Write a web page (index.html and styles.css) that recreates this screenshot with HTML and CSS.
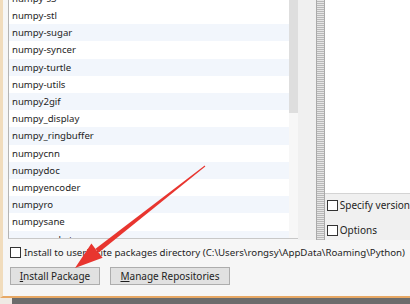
FILE: index.html
```html
<!DOCTYPE html>
<html>
<head>
<meta charset="utf-8">
<link rel="stylesheet" href="styles.css">
</head>
<body>
<div class="window">
  <div class="top">
    <div class="list">
      <div class="rows">
        <div class="row">numpy-s3</div>
        <div class="row">numpy-stl</div>
        <div class="row alt">numpy-sugar</div>
        <div class="row">numpy-syncer</div>
        <div class="row alt">numpy-turtle</div>
        <div class="row">numpy-utils</div>
        <div class="row alt">numpy2gif</div>
        <div class="row">numpy_display</div>
        <div class="row alt">numpy_ringbuffer</div>
        <div class="row">numpycnn</div>
        <div class="row alt">numpydoc</div>
        <div class="row">numpyencoder</div>
        <div class="row alt">numpyro</div>
        <div class="row">numpysane</div>
        <div class="row alt">numpysocket</div>
      </div>
      <div class="scrollbar"><div class="thumb"></div></div>
    </div>
    <div class="gap"></div>
    <div class="splitter"></div>
    <div class="right">
      <div class="desc"></div>
      <div class="opts">
        <label class="check"><span class="box"></span>Specify version</label>
        <label class="check"><span class="box"></span>Options</label>
      </div>
    </div>
  </div>
  <div class="bottom">
    <label class="check site"><span class="box"></span>Install to user's site packages directory (C:\Users\rongsy\AppData\Roaming\Python)</label>
    <div class="buttons">
      <button class="btn install"><u>I</u>nstall Package</button>
      <button class="btn manage"><u>M</u>anage Repositories</button>
    </div>
  </div>
</div>
<div class="desktop"><div class="shadow"></div><div class="taskbar"></div></div>
<svg class="arrow" width="410" height="304" viewBox="0 0 410 304">
  <polygon points="205.3,166.4 204.7,165.6 95.5,248.7 98.5,252.7" fill="#e8352f"/>
  <polygon points="75,268 91.4,243.6 97,251 102.6,257.8" fill="#e8352f"/>
</svg>
</body>
</html>
```
FILE: styles.css
```css
* { box-sizing: border-box; }
html, body { margin: 0; padding: 0; }
body {
  width: 410px;
  height: 304px;
  overflow: hidden;
  position: relative;
  background: #f4f4f4;
  font-family: "Noto Sans", "Open Sans", sans-serif;
  font-size: 9.6px;
  color: #1e1e1e;
}
.window {
  height: 298px;
  border-left: 3px solid #f1dcbc;
  border-bottom: 2px solid #e7a865;
  background: #f6f6f6;
  display: flex;
  flex-direction: column;
}
.top {
  height: 240px;
  display: flex;
  padding-left: 5px;
}
.list {
  width: 294px;
  height: 239px;
  border-left: 1px solid #b4b4b4;
  border-bottom: 1px solid #c8c8c8;
  background: #fff;
  display: flex;
  overflow: hidden;
}
.rows {
  flex: 1;
  margin-top: -10.1px;
}
.row {
  height: 17.2px;
  line-height: 17.2px;
  padding-left: 3px;
  white-space: nowrap;
}
.row.alt { background: #f2f6fc; }
.scrollbar {
  width: 9px;
  background: #f7f7f7;
}
.thumb {
  height: 113px;
  background: #dedede;
}
.gap {
  width: 18px;
  height: 240px;
  background: #f0f0f0;
}
.splitter {
  width: 9px;
  height: 240px;
  border-left: 1px solid #a9a9a9;
  border-right: 1px solid #a9a9a9;
  background-color: #e6e6e6;
  background-image: repeating-linear-gradient(0deg, #b8b8b8 0 1px, transparent 1px 2px);
}
.right {
  flex: 1;
  display: flex;
  flex-direction: column;
  background: #f0f0f0;
}
.desc {
  height: 194px;
  background: #fff;
  border-bottom: 1px solid #d4d4d4;
}
.opts {
  display: flex;
  flex-direction: column;
  gap: 11px;
  padding: 4px 0 0 2px;
}
.check {
  display: flex;
  align-items: center;
  gap: 2px;
  white-space: nowrap;
  font-size: 10px;
  height: 14px;
}
.box {
  width: 11px;
  height: 11px;
  border: 1px solid #333;
  background: #fff;
  flex: none;
}
.bottom {
  display: flex;
  flex-direction: column;
  padding: 5px 0 0 7px;
}
.site { font-size: 9.7px; gap: 3px; }
.buttons {
  display: flex;
  gap: 10px;
  margin-top: 8px;
}
.btn {
  height: 18px;
  padding: 0;
  border: 1px solid #adadad;
  background: #e1e1e1;
  font-family: inherit;
  font-size: 10px;
  color: #1e1e1e;
}
.btn u { text-decoration-thickness: 1px; text-underline-offset: 1px; }
.install { width: 90px; }
.manage { width: 120px; }
.desktop {
  height: 6px;
  display: flex;
}
.shadow { width: 12px; background: #efeae4; }
.taskbar { flex: 1; background: #6c6c6c; }
.arrow {
  position: absolute;
  left: 0;
  top: 0;
  pointer-events: none;
}
```
